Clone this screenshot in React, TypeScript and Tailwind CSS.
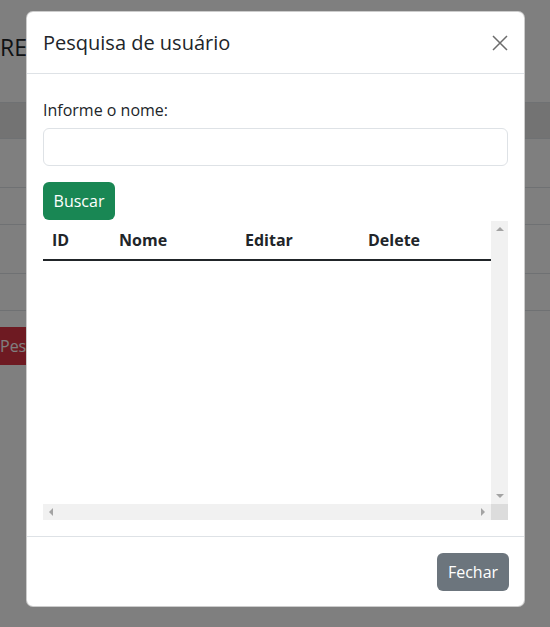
import React from "react";

const font = { fontFamily: '"Segoe UI", "Open Sans", "Noto Sans", sans-serif' };

function Background() {
  return (
    <div className="flex flex-col">
      <div className="h-[102px] flex items-center pb-[8px]">
        <div className="w-[27px] overflow-hidden">
          <h1 className="text-[23px] leading-none text-[#212529] whitespace-nowrap">RE</h1>
        </div>
      </div>
      <div className="flex flex-col w-[550px]">
        <div className="h-[37px] bg-[#e6e6e6] border-y border-[#dee2e6]" />
        <div className="h-[49px] border-b border-[#dee2e6]" />
        <div className="h-[37px] border-b border-[#dee2e6]" />
        <div className="h-[49px] border-b border-[#dee2e6]" />
        <div className="h-[37px] border-b border-[#dee2e6]" />
      </div>
      <div className="mt-[16px] -ml-[16px] w-[43px] overflow-hidden">
        <div className="inline-flex items-center h-[38px] px-[16px] bg-[#dc3545] text-white text-[16px] rounded-[6px] whitespace-nowrap">
          Pesquisar
        </div>
      </div>
    </div>
  );
}

function Tri({ dir }: { dir: "up" | "down" | "left" | "right" }) {
  const pts =
    dir === "up"
      ? "0,4 4,0 8,4"
      : dir === "down"
      ? "0,0 8,0 4,4"
      : dir === "left"
      ? "4,0 4,8 0,4"
      : "0,0 4,4 0,8";
  const w = dir === "up" || dir === "down" ? 8 : 4;
  const h = dir === "up" || dir === "down" ? 4 : 8;
  return (
    <svg width={w} height={h} viewBox={`0 0 ${w} ${h}`}>
      <polygon points={pts} fill="#a3a3a3" />
    </svg>
  );
}

export default function App() {
  return (
    <div className="relative w-[550px] h-[627px] overflow-hidden bg-white" style={font}>
      <Background />
      <div className="absolute inset-0 bg-black/50" />
      <div className="absolute left-[26px] top-[11px] w-[499px] h-[596px] bg-white rounded-[7px] border border-black/20 flex flex-col text-[#212529]">
        <div className="h-[62px] flex items-center justify-between px-[16px] border-b border-[#dee2e6] shrink-0">
          <h5 className="text-[20px] leading-[30px] font-normal">Pesquisa de usuário</h5>
          <svg width="16" height="16" viewBox="0 0 16 16">
            <path d="M1 1 L15 15 M15 1 L1 15" stroke="#6c6c6c" strokeWidth="1.5" />
          </svg>
        </div>
        <div className="flex flex-col px-[16px] pt-[24px] pb-[16px] flex-1">
          <label className="text-[16px] leading-[24px]">Informe o nome:</label>
          <div className="mt-[6px] h-[38px] rounded-[6px] border border-[#dee2e6] bg-white" />
          <div className="mt-[16px]">
            <button className="h-[38px] w-[72px] rounded-[6px] bg-[#198754] text-white text-[16px] leading-[24px]">
              Buscar
            </button>
          </div>
          <div className="mt-[1px] h-[299px] flex flex-col">
            <div className="flex flex-1">
              <div className="flex-1">
                <div className="flex border-b-2 border-[#212529] font-bold text-[16px] leading-[24px] h-[40px] items-center">
                  <div className="w-[68px] pl-[9px]">ID</div>
                  <div className="w-[126px] pl-[8px]">Nome</div>
                  <div className="w-[123px] pl-[8px]">Editar</div>
                  <div className="flex-1 pl-[8px]">Delete</div>
                </div>
              </div>
              <div className="w-[17px] bg-[#f1f1f1] flex flex-col justify-between items-center py-[6px]">
                <Tri dir="up" />
                <Tri dir="down" />
              </div>
            </div>
            <div className="flex h-[16px]">
              <div className="flex-1 bg-[#f1f1f1] flex justify-between items-center px-[6px]">
                <Tri dir="left" />
                <Tri dir="right" />
              </div>
              <div className="w-[17px] bg-[#dcdcdc]" />
            </div>
          </div>
        </div>
        <div className="h-[71px] border-t border-[#dee2e6] flex items-center justify-end px-[15px] shrink-0">
          <button className="h-[38px] w-[72px] rounded-[6px] bg-[#6c757d] text-white text-[16px] leading-[24px]">
            Fechar
          </button>
        </div>
      </div>
    </div>
  );
}
